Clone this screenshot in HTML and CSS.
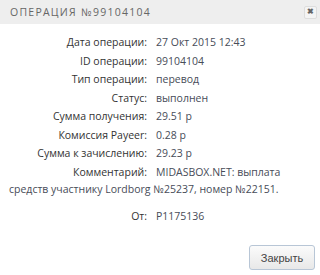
FILE: index.html
```html
<!DOCTYPE html>
<html>
<head>
<meta charset="utf-8">
<link rel="stylesheet" href="styles.css">
</head>
<body>
<div class="dialog">
  <div class="header">
    <span class="title">Операция №99104104</span>
    <span class="close">&#x2716;</span>
  </div>
  <div class="content">
    <div class="row"><span class="label">Дата операции:</span><span class="value">27 Окт 2015 12:43</span></div>
    <div class="row"><span class="label">ID операции:</span><span class="value">99104104</span></div>
    <div class="row"><span class="label">Тип операции:</span><span class="value">перевод</span></div>
    <div class="row"><span class="label">Статус:</span><span class="value">выполнен</span></div>
    <div class="row"><span class="label">Сумма получения:</span><span class="value">29.51 р</span></div>
    <div class="row"><span class="label">Комиссия Payeer:</span><span class="value">0.28 р</span></div>
    <div class="row"><span class="label">Сумма к зачислению:</span><span class="value">29.23 р</span></div>
    <div class="row"><span class="label">Комментарий:</span><span class="value">MIDASBOX.NET: выплата</span></div>
    <div class="row cont"><span class="value">средств участнику Lordborg №25237, номер №22151.</span></div>
    <div class="row from"><span class="label">От:</span><span class="value">P1175136</span></div>
  </div>
  <div class="footer">
    <button class="btn">Закрыть</button>
  </div>
</div>
</body>
</html>
```
FILE: styles.css
```css
html, body {
  margin: 0;
  padding: 0;
  background: #fff;
}
.dialog {
  width: 320px;
  height: 275px;
  font-family: "Open Sans", "Lato", sans-serif;
}
.header {
  height: 24px;
  background: #eeeeee;
  display: flex;
  align-items: center;
  justify-content: space-between;
  padding: 0 3px 0 10px;
}
.title {
  text-transform: uppercase;
  color: #666;
  font-size: 10.5px;
  letter-spacing: 1.25px;
}
.close {
  width: 11px;
  height: 11px;
  border: 1px solid #dddddd;
  border-radius: 2px;
  background: #f4f4f4;
  color: #666;
  font-size: 7.5px;
  font-weight: bold;
  display: flex;
  align-items: center;
  justify-content: center;
  line-height: 1;
}
.content {
  padding: 9px 8px 0 9px;
  font-size: 10.5px;
  color: #333;
}
.row {
  line-height: 18.5px;
}
.row.cont {
  line-height: 16.5px;
}
.row.from {
  margin-top: 9px;
}
.label {
  display: inline-block;
  width: 138px;
  padding-right: 9px;
  text-align: right;
  color: #333;
}
.value {
  color: #474c58;
}
.footer {
  display: flex;
  justify-content: flex-end;
  padding: 20px 5px 0 0;
}
.btn {
  width: 66px;
  height: 25px;
  border: 1px solid #b8c6d6;
  border-radius: 3px;
  background: linear-gradient(#fbfbfb, #e8e8e8);
  font-family: "Liberation Sans", Arial, sans-serif;
  font-size: 11px;
  color: #444;
  padding: 0;
}
```
